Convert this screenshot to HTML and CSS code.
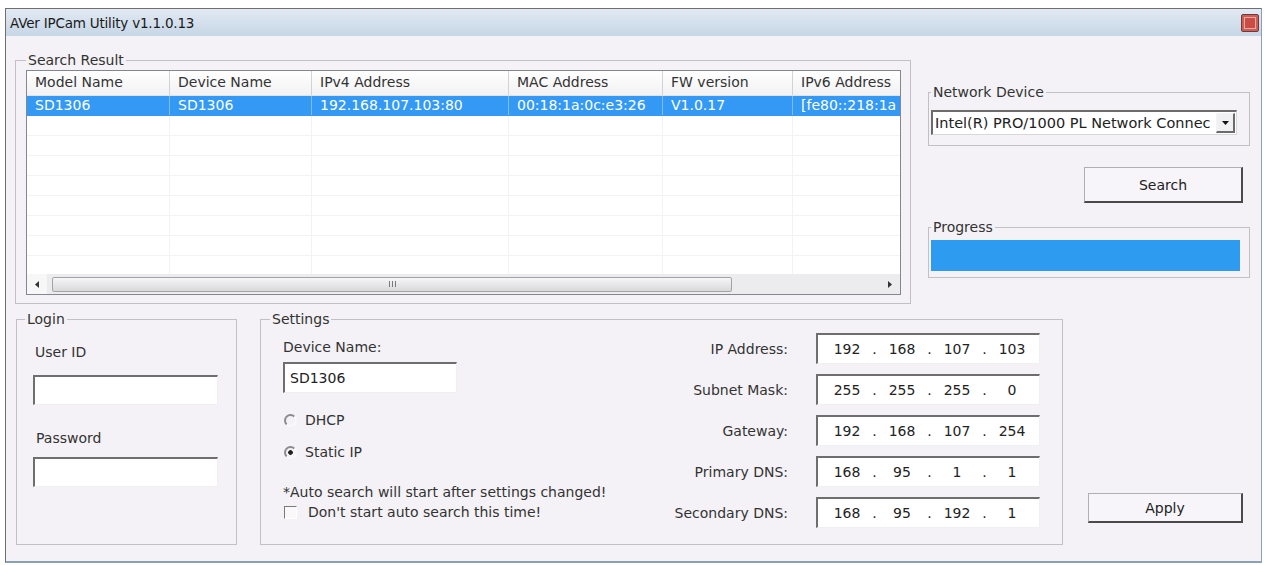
FILE: index.html
```html
<!DOCTYPE html>
<html lang="en">
<head>
    <meta charset="UTF-8">
    <meta name="viewport" content="width=device-width, initial-scale=1.0">
    <title>AVer IPCam Utility v1.1.0.13</title>
    <link rel="stylesheet" href="styles.css">
</head>
<body>
    <div class="window">
        <div class="titlebar">
            <span class="title">AVer IPCam Utility v1.1.0.13</span>
            <span class="close"></span>
        </div>
        <div class="client">
            <div class="top-row">
                <fieldset class="group search-group">
                    <legend>Search Result</legend>
                    <div class="listview">
                        <div class="lv-head">
                            <div class="col c1">Model Name</div>
                            <div class="col c2">Device Name</div>
                            <div class="col c3">IPv4 Address</div>
                            <div class="col c4">MAC Address</div>
                            <div class="col c5">FW version</div>
                            <div class="col c6">IPv6 Address</div>
                        </div>
                        <div class="lv-body">
                            <div class="lv-row selected">
                                <div class="col c1">SD1306</div>
                                <div class="col c2">SD1306</div>
                                <div class="col c3">192.168.107.103:80</div>
                                <div class="col c4">00:18:1a:0c:e3:26</div>
                                <div class="col c5">V1.0.17</div>
                                <div class="col c6">[fe80::218:1a</div>
                            </div>
                            <div class="lv-row"><div class="col c1"></div><div class="col c2"></div><div class="col c3"></div><div class="col c4"></div><div class="col c5"></div><div class="col c6"></div></div>
                            <div class="lv-row"><div class="col c1"></div><div class="col c2"></div><div class="col c3"></div><div class="col c4"></div><div class="col c5"></div><div class="col c6"></div></div>
                            <div class="lv-row"><div class="col c1"></div><div class="col c2"></div><div class="col c3"></div><div class="col c4"></div><div class="col c5"></div><div class="col c6"></div></div>
                            <div class="lv-row"><div class="col c1"></div><div class="col c2"></div><div class="col c3"></div><div class="col c4"></div><div class="col c5"></div><div class="col c6"></div></div>
                            <div class="lv-row"><div class="col c1"></div><div class="col c2"></div><div class="col c3"></div><div class="col c4"></div><div class="col c5"></div><div class="col c6"></div></div>
                            <div class="lv-row"><div class="col c1"></div><div class="col c2"></div><div class="col c3"></div><div class="col c4"></div><div class="col c5"></div><div class="col c6"></div></div>
                            <div class="lv-row"><div class="col c1"></div><div class="col c2"></div><div class="col c3"></div><div class="col c4"></div><div class="col c5"></div><div class="col c6"></div></div>
                            <div class="lv-row"><div class="col c1"></div><div class="col c2"></div><div class="col c3"></div><div class="col c4"></div><div class="col c5"></div><div class="col c6"></div></div>
                        </div>
                        <div class="hscroll">
                            <span class="sb-arrow">
                                <svg width="4" height="7" viewBox="0 0 4 7"><polygon points="4,0 0,3.5 4,7" fill="#333"/></svg>
                            </span>
                            <span class="sb-thumb"><span class="grip"></span></span>
                            <span class="sb-arrow sb-right">
                                <svg width="4" height="7" viewBox="0 0 4 7"><polygon points="0,0 4,3.5 0,7" fill="#333"/></svg>
                            </span>
                        </div>
                    </div>
                </fieldset>

                <div class="side">
                    <fieldset class="group net-group">
                        <legend>Network Device</legend>
                        <div class="combo">
                            <span class="combo-text">Intel(R) PRO/1000 PL Network Connec</span>
                            <span class="combo-btn">
                                <svg width="7" height="4" viewBox="0 0 7 4"><polygon points="0,0 7,0 3.5,4" fill="#111"/></svg>
                            </span>
                        </div>
                    </fieldset>
                    <button class="btn search-btn" type="button">Search</button>
                    <fieldset class="group progress-group">
                        <legend>Progress</legend>
                        <div class="progress"></div>
                    </fieldset>
                </div>
            </div>

            <div class="bottom-row">
                <fieldset class="group login-group">
                    <legend>Login</legend>
                    <div class="login-body">
                        <div class="lbl user-lbl">User ID</div>
                        <input class="field login-field" type="text">
                        <div class="lbl pass-lbl">Password</div>
                        <input class="field login-field pass-field" type="password">
                    </div>
                </fieldset>

                <fieldset class="group settings-group">
                    <legend>Settings</legend>
                    <div class="settings-body">
                        <div class="settings-left">
                            <div class="lbl dev-lbl">Device Name:</div>
                            <input class="field dev-field" type="text" value="SD1306">
                            <label class="opt dhcp"><span class="radio"></span>DHCP</label>
                            <label class="opt static"><span class="radio on"></span>Static IP</label>
                            <div class="note">*Auto search will start after settings changed!</div>
                            <label class="opt chk"><span class="checkbox"></span>Don't start auto search this time!</label>
                        </div>
                        <div class="ip-grid">
                            <div class="ip-lbl">IP Address:</div>
                            <div class="field ip"><span>192</span><i>.</i><span>168</span><i>.</i><span>107</span><i>.</i><span>103</span></div>
                            <div class="ip-lbl">Subnet Mask:</div>
                            <div class="field ip"><span>255</span><i>.</i><span>255</span><i>.</i><span>255</span><i>.</i><span>0</span></div>
                            <div class="ip-lbl">Gateway:</div>
                            <div class="field ip"><span>192</span><i>.</i><span>168</span><i>.</i><span>107</span><i>.</i><span>254</span></div>
                            <div class="ip-lbl">Primary DNS:</div>
                            <div class="field ip"><span>168</span><i>.</i><span>95</span><i>.</i><span>1</span><i>.</i><span>1</span></div>
                            <div class="ip-lbl">Secondary DNS:</div>
                            <div class="field ip"><span>168</span><i>.</i><span>95</span><i>.</i><span>192</span><i>.</i><span>1</span></div>
                        </div>
                    </div>
                </fieldset>

                <button class="btn apply-btn" type="button">Apply</button>
            </div>
        </div>
    </div>
</body>
</html>
```

FILE: styles.css
```css
body {
    margin: 0;
    font-family: "DejaVu Sans", Verdana, sans-serif;
    font-size: 14px;
    line-height: 16px;
    color: #333;
    background: #fff;
}
.window {
    width: 1257px;
    height: 555px;
    margin: 8px 0 0 5px;
    box-sizing: border-box;
    border: 1px solid #8aa0b5;
    border-top-color: #6f6f6f;
    border-left-color: #6f6f6f;
    border-bottom-width: 2px;
    background: #f4f2f6;
    display: flex;
    flex-direction: column;
}
.titlebar {
    height: 27px;
    flex: none;
    display: flex;
    align-items: center;
    padding: 0 2px 0 4px;
    background: linear-gradient(#e2eaf3, #c6d6e6);
}
.title {
    font-size: 13.5px;
    color: #1a1a1a;
    letter-spacing: -0.2px;
}
.close {
    margin-left: auto;
    width: 16px;
    height: 16px;
    border: 1px solid #6a3c3c;
    border-radius: 2px;
    background: #c94c45;
    box-shadow: inset 0 0 0 2px #cf5d56, inset 0 0 0 3px #eaa9a2;
}
.client {
    flex: 1;
    padding: 16px 0 0 9px;
}
.group {
    margin: 0;
    min-width: 0;
    box-sizing: border-box;
    border: 1px solid #c2c0c6;
}
legend {
    padding: 0 2px;
    line-height: 16px;
    color: #333;
}
.top-row {
    display: flex;
    align-items: flex-start;
    height: 252px;
}
.search-group {
    width: 896px;
    height: 252px;
    padding: 2px 9px 8px 10px;
}
.listview {
    height: 225px;
    box-sizing: border-box;
    border: 1px solid #828790;
    background: #fff;
    display: flex;
    flex-direction: column;
    overflow: hidden;
}
.lv-head,
.lv-row {
    display: flex;
    flex: none;
}
.col {
    flex: none;
    box-sizing: border-box;
    padding-left: 8px;
    white-space: nowrap;
    overflow: hidden;
}
.c1 { width: 143px; }
.c2 { width: 142px; }
.c3 { width: 197px; }
.c4 { width: 154px; }
.c5 { width: 130px; }
.c6 { width: 130px; }
.lv-head {
    height: 24px;
    border-bottom: 1px solid #e3e3e6;
    background: linear-gradient(#fff, #f2f2f4);
}
.lv-head .col {
    line-height: 23px;
    border-right: 1px solid #d3d3d6;
    color: #333;
}
.lv-body {
    flex: 1;
    overflow: hidden;
}
.lv-row {
    height: 20px;
    border-bottom: 1px solid #f3f3f3;
    box-sizing: border-box;
}
.lv-row .col {
    line-height: 19px;
    border-right: 1px solid #f2f2f2;
}
.lv-row.selected {
    background: #3399f5;
    color: #fff;
    border-bottom-color: #3399f5;
}
.lv-row.selected .col {
    border-right-color: #7dbdf8;
}
.hscroll {
    flex: none;
    height: 20px;
    display: flex;
    align-items: center;
    background: #ececee;
}
.sb-arrow {
    width: 20px;
    height: 20px;
    display: flex;
    align-items: center;
    justify-content: center;
    background: #f7f7f8;
}
.sb-right {
    margin-left: auto;
    background: #ececee;
}
.sb-thumb {
    margin-left: 5px;
    width: 680px;
    height: 15px;
    box-sizing: border-box;
    border: 1px solid #a4a4a8;
    border-radius: 2px;
    background: linear-gradient(#f6f6f7, #d9d9dc);
    display: flex;
    align-items: center;
    justify-content: center;
}
.grip {
    width: 7px;
    height: 6px;
    background: repeating-linear-gradient(90deg, #7a7a7e 0 1px, transparent 1px 3px);
}
.side {
    width: 322px;
    margin-left: 17px;
    display: flex;
    flex-direction: column;
}
.net-group {
    margin-top: 32px;
    height: 62px;
    padding: 10px 12px 0 2px;
}
.combo {
    height: 25px;
    box-sizing: border-box;
    border-style: solid;
    border-width: 2px 1px 1px 2px;
    border-color: #6b6b6b #d8d8d8 #d8d8d8 #6b6b6b;
    background: #fff;
    display: flex;
    align-items: center;
}
.combo-text {
    flex: 1;
    padding-left: 2px;
    font-size: 14.5px;
    line-height: 22px;
    white-space: nowrap;
    overflow: hidden;
    color: #222;
}
.combo-btn {
    width: 19px;
    height: 20px;
    margin-right: 1px;
    box-sizing: border-box;
    border-style: solid;
    border-width: 1px 2px 2px 1px;
    border-color: #f4f4f4 #6b6b6b #6b6b6b #f4f4f4;
    background: #f0eff2;
    display: flex;
    align-items: center;
    justify-content: center;
}
.btn {
    font: inherit;
    color: #222;
    padding: 0;
    background: #f7f5f9;
    border-style: solid;
    border-width: 1px 2px 2px 1px;
    border-color: #b0b0b4 #4a4a4a #4a4a4a #b0b0b4;
    cursor: pointer;
}
.search-btn {
    align-self: flex-end;
    margin: 21px 7px 0 0;
    width: 159px;
    height: 36px;
}
.progress-group {
    margin-top: 16px;
    height: 59px;
    padding: 5px 9px 0 2px;
}
.progress {
    width: 309px;
    height: 31px;
    background: #2d9bf0;
}
.bottom-row {
    display: flex;
    margin-top: 7px;
}
.login-group {
    margin-left: 1px;
    width: 221px;
    height: 234px;
    padding: 0 8px;
}
.login-body {
    padding-left: 8px;
}
.field {
    box-sizing: border-box;
    border-style: solid;
    border-width: 2px 1px 1px 2px;
    border-color: #6e6e6e #f0f0f0 #f0f0f0 #6e6e6e;
    background: #fff;
    font: inherit;
    color: #222;
    margin: 0;
    outline: none;
}
.lbl {
    height: 16px;
}
.user-lbl {
    margin-top: 17px;
    padding-left: 2px;
}
.login-field {
    display: block;
    width: 185px;
    height: 30px;
    margin-top: 15px;
}
.pass-lbl {
    margin-top: 25px;
    padding-left: 3px;
}
.pass-field {
    margin-top: 11px;
}
.settings-group {
    margin-left: 23px;
    width: 803px;
    height: 234px;
    padding: 0 22px 0 9px;
}
.settings-body {
    display: flex;
    justify-content: space-between;
    padding-left: 13px;
}
.settings-left {
    display: flex;
    flex-direction: column;
    align-items: flex-start;
}
.dev-lbl {
    margin-top: 12px;
}
.dev-field {
    width: 174px;
    height: 31px;
    margin-top: 7px;
    padding: 0 0 0 5px;
}
.opt {
    display: flex;
    align-items: center;
    height: 16px;
    gap: 8px;
}
.dhcp {
    margin-top: 19px;
}
.static {
    margin-top: 16px;
}
.radio {
    width: 13px;
    height: 13px;
    margin-left: 1px;
    box-sizing: border-box;
    border-radius: 50%;
    border: 2px solid;
    border-color: #8a8a8a #f8f8f8 #f8f8f8 #8a8a8a;
}
.radio.on {
    background: radial-gradient(circle, #222 0 2px, transparent 2.6px);
}
.note {
    margin-top: 24px;
    height: 16px;
    white-space: nowrap;
}
.chk {
    margin-top: 4px;
    gap: 11px;
}
.checkbox {
    width: 13px;
    height: 13px;
    margin-left: 1px;
    box-sizing: border-box;
    border: 1px solid;
    border-color: #7a7a7a #fff #fff #7a7a7a;
    background: #f9f9fa;
}
.ip-grid {
    display: grid;
    grid-template-columns: auto 224px;
    grid-auto-rows: 31px;
    column-gap: 28px;
    row-gap: 10px;
    align-items: center;
    margin-top: 6px;
}
.ip-lbl {
    text-align: right;
    white-space: nowrap;
}
.ip {
    height: 31px;
    display: flex;
    align-items: center;
    padding-left: 6px;
}
.ip span {
    width: 46px;
    text-align: center;
}
.ip i {
    width: 9px;
    font-style: normal;
    text-align: center;
}
.apply-btn {
    align-self: flex-end;
    margin: 0 0 22px 25px;
    width: 155px;
    height: 30px;
}
```
